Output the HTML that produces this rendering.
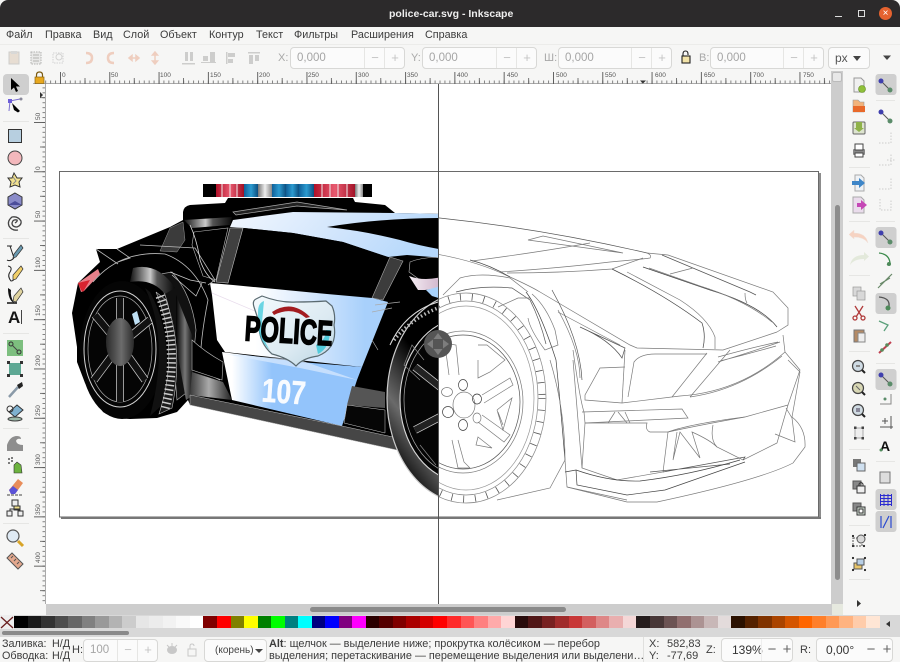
<!DOCTYPE html>
<html><head><meta charset="utf-8"><title>police-car.svg - Inkscape</title>
<style>
html,body{margin:0;padding:0;width:900px;height:662px;overflow:hidden;background:#f6f6f5}
body{position:relative;font-family:"Liberation Sans","DejaVu Sans",sans-serif;color:#3d3d3d}
.a{position:absolute}
.t{position:absolute;white-space:nowrap;line-height:14px}
.menu .t{top:28px;font-size:10.8px;color:#3c3c3c}
.inp{position:absolute;box-sizing:border-box;height:22px;background:#fbfbfb;border:1px solid #d8d8d6;border-radius:4px;font-size:11.5px;color:#a5a5a5;line-height:20px;padding-left:6px}
.inp i{position:absolute;top:0;bottom:0;width:20px;border-left:1px solid #e6e6e4;font-style:normal;text-align:center;color:#c4c4c4;font-size:13px;padding:0}
.lab{position:absolute;font-size:11px;color:#a8a8a8;top:51px;line-height:14px}
.r{position:absolute;font-size:6.5px;color:#555;top:72px;line-height:8px}
.rv{position:absolute;left:34px;font-size:6.5px;color:#555;transform:rotate(-90deg);transform-origin:0 0;line-height:8px;white-space:nowrap}
#wrap{filter:blur(.3px);position:absolute;left:0;top:0;width:900px;height:662px}
</style></head><body><div id="wrap">

<!-- title bar -->
<div class="a" style="left:0;top:0;width:900px;height:27px;background:#2c2a2b;border-radius:8px 8px 0 0"></div>
<div class="t" style="left:389px;top:7px;font-size:10.5px;font-weight:bold;color:#efefef">police-car.svg - Inkscape</div>
<div class="a" style="left:835px;top:16px;width:7px;height:1px;background:#ddd"></div>
<div class="a" style="left:858px;top:10px;width:5px;height:5px;border:1px solid #ddd"></div>
<div class="a" style="left:879px;top:7px;width:13px;height:13px;border-radius:50%;background:#e5622f;color:#fff;font-size:10px;line-height:13px;text-align:center">×</div>

<!-- menu -->
<div class="menu">
<div class="t" style="left:6px">Файл</div><div class="t" style="left:45px">Правка</div><div class="t" style="left:93px">Вид</div><div class="t" style="left:123px">Слой</div><div class="t" style="left:160px">Объект</div><div class="t" style="left:209px">Контур</div><div class="t" style="left:256px">Текст</div><div class="t" style="left:294px">Фильтры</div><div class="t" style="left:351px">Расширения</div><div class="t" style="left:425px">Справка</div>
</div>
<div class="a" style="left:0;top:44px;width:900px;height:1px;background:#ececea"></div>

<!-- top toolbar inputs -->
<div class="lab" style="left:278px">X:</div>
<div class="inp" style="left:290px;top:47px;width:115px">0,000<i style="left:73px">−</i><i style="left:93px">+</i></div>
<div class="lab" style="left:411px">Y:</div>
<div class="inp" style="left:422px;top:47px;width:115px">0,000<i style="left:73px">−</i><i style="left:93px">+</i></div>
<div class="lab" style="left:544px">Ш:</div>
<div class="inp" style="left:558px;top:47px;width:114px">0,000<i style="left:72px">−</i><i style="left:92px">+</i></div>
<div class="lab" style="left:699px">В:</div>
<div class="inp" style="left:710px;top:47px;width:114px">0,000<i style="left:72px">−</i><i style="left:92px">+</i></div>
<div class="inp" style="left:828px;top:47px;width:42px;color:#555;font-size:12px">px</div>

<!-- rulers -->
<div class="a" style="left:33px;top:71px;width:798px;height:13px;background:#f6f6f5;border-bottom:1px solid #aaa;box-sizing:border-box"></div>
<div class="r" style="left:62px">0</div><div class="r" style="left:111px">50</div><div class="r" style="left:160px">100</div><div class="r" style="left:210px">150</div><div class="r" style="left:259px">200</div><div class="r" style="left:308px">250</div><div class="r" style="left:358px">300</div><div class="r" style="left:407px">350</div><div class="r" style="left:457px">400</div><div class="r" style="left:507px">450</div><div class="r" style="left:556px">500</div><div class="r" style="left:605px">550</div><div class="r" style="left:655px">600</div><div class="r" style="left:704px">650</div><div class="r" style="left:753px">700</div><div class="r" style="left:803px">750</div>

<!-- canvas -->
<div class="a" style="left:46px;top:84px;width:785px;height:520px;background:#fff"></div>
<div class="a" style="left:831px;top:71px;width:12px;height:545px;background:#cdcdcd"></div>
<div class="a" style="left:835px;top:205px;width:5px;height:375px;background:#8c8c8c;border-radius:3px"></div>
<div class="a" style="left:46px;top:604px;width:785px;height:12px;background:#cdcdcd"></div>
<div class="a" style="left:310px;top:607px;width:256px;height:5px;background:#8a8a8a;border-radius:3px"></div>
<div class="a" style="left:832px;top:604px;width:11px;height:12px;background:#e6e9df"></div>
<div class="a" style="left:832px;top:72px;width:10px;height:10px;background:#e8e8e8;border:1px solid #bbb;border-radius:2px;box-sizing:border-box"></div>

<!-- main drawing -->
<svg class="a" style="left:0;top:0" width="900" height="662" viewBox="0 0 900 662">
<defs>
<pattern id="tx" width="4.93" height="13" patternUnits="userSpaceOnUse" x="60" y="71"><rect x="0" y="9.5" width=".8" height="3" fill="#666"/></pattern>
<pattern id="ty" width="13" height="4.93" patternUnits="userSpaceOnUse" x="33" y="122"><rect x="9.5" y="0" width="3" height=".8" fill="#666"/></pattern>
<pattern id="tX" width="49.3" height="13" patternUnits="userSpaceOnUse" x="60" y="71"><rect x="0" y="1" width=".9" height="12" fill="#555"/><rect x="24.6" y="7" width=".8" height="6" fill="#555"/></pattern>
<pattern id="tY" width="13" height="49.3" patternUnits="userSpaceOnUse" x="33" y="122"><rect x="1" y="0" width="12" height=".9" fill="#555"/><rect x="7" y="24.6" width="6" height=".8" fill="#555"/></pattern>
<clipPath id="cl"><rect x="46" y="84" width="392" height="520"/></clipPath>
<clipPath id="cr"><rect x="438.5" y="84" width="393" height="520"/></clipPath>
<linearGradient id="doorT" gradientUnits="userSpaceOnUse" x1="255" y1="0" x2="365" y2="0"><stop offset="0" stop-color="#fff"/><stop offset=".45" stop-color="#dcebfd"/><stop offset="1" stop-color="#a8d0fb"/></linearGradient>
<linearGradient id="doorB" gradientUnits="userSpaceOnUse" x1="232" y1="0" x2="272" y2="0"><stop offset="0" stop-color="#fff"/><stop offset="1" stop-color="#93c4fb"/></linearGradient>
<linearGradient id="roofb" x1="0" y1="0" x2="1" y2=".2"><stop offset="0" stop-color="#f2f7fe"/><stop offset=".6" stop-color="#cfe4fc"/><stop offset="1" stop-color="#b6d8fb"/></linearGradient>
<linearGradient id="met" x1="0" y1="0" x2="1" y2="0"><stop offset="0" stop-color="#111"/><stop offset=".45" stop-color="#c9c9c9"/><stop offset=".6" stop-color="#555"/><stop offset="1" stop-color="#0a0a0a"/></linearGradient>
<linearGradient id="met2" x1="0" y1="0" x2="1" y2="0"><stop offset="0" stop-color="#000"/><stop offset=".5" stop-color="#777"/><stop offset="1" stop-color="#000"/></linearGradient>
<linearGradient id="grs" x1="0" y1="0" x2="1" y2="0"><stop offset="0" stop-color="#3a3a3a"/><stop offset=".45" stop-color="#aaa"/><stop offset="1" stop-color="#222"/></linearGradient>
<linearGradient id="lbb" x1="0" y1="0" x2="1" y2="0"><stop offset="0" stop-color="#0f5f98"/><stop offset=".5" stop-color="#2c9bd0"/><stop offset="1" stop-color="#0d4f80"/></linearGradient>
<linearGradient id="lbr" x1="0" y1="0" x2="1" y2="0"><stop offset="0" stop-color="#b01028"/><stop offset=".5" stop-color="#e85a70"/><stop offset="1" stop-color="#a00f24"/></linearGradient>
<linearGradient id="lbw" x1="0" y1="0" x2="1" y2="0"><stop offset="0" stop-color="#777"/><stop offset=".5" stop-color="#eee"/><stop offset="1" stop-color="#888"/></linearGradient>
<linearGradient id="hub" x1="0" y1="0" x2="1" y2="0"><stop offset="0" stop-color="#2a2a2a"/><stop offset=".55" stop-color="#6c6c6c"/><stop offset="1" stop-color="#2a2a2a"/></linearGradient>
<linearGradient id="sh" x1="0" y1="0" x2="1" y2="1"><stop offset="0" stop-color="#f4fafd"/><stop offset=".6" stop-color="#dceaf2"/><stop offset="1" stop-color="#b8d4e2"/></linearGradient>
<linearGradient id="pink" x1="0" y1="0" x2="1" y2="0"><stop offset="0" stop-color="#f6eef4"/><stop offset="1" stop-color="#cbaec6"/></linearGradient>
<linearGradient id="tire" x1="1" y1="0" x2="0" y2="1"><stop offset=".55" stop-color="#000"/><stop offset=".74" stop-color="#6a6a6a"/><stop offset=".9" stop-color="#000"/></linearGradient>
</defs>

<rect x="33" y="71" width="798" height="13" fill="url(#tx)"/><rect x="33" y="71" width="798" height="13" fill="url(#tX)"/>
<rect x="33" y="84" width="13" height="520" fill="#f6f6f5"/>
<rect x="33" y="84" width="13" height="520" fill="url(#ty)"/><rect x="33" y="84" width="13" height="520" fill="url(#tY)"/>
<g font-family="Liberation Sans,sans-serif" font-size="6.500" fill="#555"><text transform="translate(40 120) rotate(-90)">50</text><text transform="translate(40 170) rotate(-90)">0</text><text transform="translate(40 218) rotate(-90)">50</text><text transform="translate(40 268) rotate(-90)">100</text><text transform="translate(40 316) rotate(-90)">150</text><text transform="translate(40 366) rotate(-90)">200</text><text transform="translate(40 416) rotate(-90)">250</text><text transform="translate(40 465) rotate(-90)">300</text><text transform="translate(40 515) rotate(-90)">350</text><text transform="translate(40 563) rotate(-90)">400</text></g>
<path d="M45.5 84V604" stroke="#aaa" stroke-width="1"/>
<path d="M640 80.500h6l-3 3z" fill="#333"/>
<path d="M40 92v6l3-3z" fill="#333"/>

<!-- page -->
<rect x="59.500" y="171.500" width="759" height="345.500" fill="#fff" stroke="#6a6a6a" stroke-width="1"/>
<rect x="819" y="173" width="2" height="346" fill="#8c8c8c"/>
<rect x="61" y="517" width="760" height="2" fill="#777"/>

<!-- left: colored car -->
<g clip-path="url(#cl)">
<path d="M72 313L78 283L100 262L96 249L117 249L170 227L183 220L183 212Q184 206 190 205L225 203L228 198H353L355 202L385 205L395 213L445 214V500L397 450L190 405L188 400L177 412L157 418L130 419Q112 418 103 412L85 383L77 362V347Z" fill="#000"/>
<!-- red tail -->
<path d="M78 283L98 269L100 274L84 291L81 292Z" fill="#e8808a"/><path d="M78 283L90 280L83 292L81 290Z" fill="#d8232f"/>
<!-- roof blue -->
<path d="M233 220L262 216L293 212L395 213L445 214V258L407 255L388 257L343 242L293 233L244 228L230 227Z" fill="url(#roofb)"/>
<path d="M327 227Q380 218 445 218V250Q420 246 400 240Q365 231 327 227Z" fill="#000"/>
<path d="M233 212L297 202L347 210L320 208L297 206L236 215Z" fill="#222" stroke="#aaa" stroke-width=".7"/>
<!-- window -->
<path d="M244 228L293 233L343 242L388 257L372 298L327 294L233 285Z" fill="#000"/>
<path d="M230 228L243 228L228 283L216 282Z" fill="#404040" stroke="#bbb" stroke-width=".6"/>
<path d="M390 257L403 261L383 300L372 298Z" fill="#3c3c3c" stroke="#aaa" stroke-width=".6"/>
<path d="M184 220L232 217L230 225L192 228Z" fill="url(#met)"/>
<path d="M160 251L170 228L183 222L185 240L177 252Z" fill="#3b3b3b" stroke="#999" stroke-width=".5"/>
<path d="M194 232L228 228L216 280L203 276L192 245Z" fill="#000" stroke="#bbb" stroke-width=".6"/>
<!-- door -->
<path d="M210 283L233 285L327 294L372 298L388 302L362 367L225 352L217 340L212 295Z" fill="url(#doorT)"/>
<path d="M222 352L300 362L362 367L357 380L342 426L232 400Z" fill="url(#doorB)"/>
<path d="M225 354L300 368L357 380L300 360Z" fill="#dcebfd" opacity=".7"/>
<path d="M212 293L300 330" stroke="#e8dcec" stroke-width=".7" fill="none"/>
<!-- lines on rear body -->
<path d="M96 249L118 264M117 249L130 258L118 262M140 245L195 248L215 280L208 285" stroke="#bbb" stroke-width=".8" fill="none"/>
<path d="M190 225Q197 240 200 260Q205 275 215 282" fill="none" stroke="#ddd" stroke-width=".8"/>
<path d="M93 282Q120 250 165 254Q195 265 208 300Q200 340 200 370L220 380" stroke="#bbb" fill="none" stroke-width=".8"/>
<path d="M172 272Q192 295 196 330L190 390L177 400L172 340Q172 300 155 275Z" fill="#111" stroke="#aaa" stroke-width=".7"/>
<path d="M176 295L192 335L194 395L186 400L176 345Z" fill="url(#met2)"/>
<path d="M133 268Q158 262 175 288L165 294Q152 278 130 282Z" fill="url(#met)"/>
<path d="M170 272L190 280L206 283M172 275L196 296L202 283" stroke="#ccc" fill="none" stroke-width=".7"/>
<path d="M192 372L223 382L232 400L190 395Z" fill="url(#grs)"/>
<path d="M352 386L385 392L385 408L347 405Z" fill="#555"/>
<path d="M347 405L385 410L385 433L344 423Z" fill="#060606" stroke="#ccc" stroke-width=".5"/>
<path d="M190 395L342 426L393 437L397 450L190 405Z" fill="#464646" stroke="#bdbdbd" stroke-width=".5"/>
<path d="M192 340Q205 352 223 362L222 380L192 370Z" fill="#000" stroke="#bbb" stroke-width=".6"/>
<path d="M375 305L400 302M372 312L392 308M372 340L378 350" stroke="#aaa" fill="none" stroke-width=".7"/>
<!-- headlight region -->
<path d="M410 262Q425 256 445 258V290L420 280L409 272Z" fill="#000" stroke="#bbb" stroke-width=".6"/>
<path d="M409 276Q425 282 445 276V287L425 290L418 290Z" fill="url(#pink)"/>
<path d="M426 290L445 285V300L432 296Z" fill="#a8d2fb"/>
<!-- rear wheel -->
<ellipse cx="122" cy="350" rx="42" ry="69" fill="#050505"/>
<path d="M150 292Q176 340 162 405L150 416Q170 340 145 288Z" fill="#111"/>
<path d="M156 292Q180 350 159 414L172 408Q184 350 166 300Z" fill="#1c1c1c" stroke="#bbb" stroke-width=".6"/>
<path d="M160 296Q180 350 165 409" fill="none" stroke="#ccc" stroke-width="9" stroke-dasharray="1.500 3"/>
<ellipse cx="120" cy="349" rx="36" ry="58" fill="#050505" stroke="#d4d4d4" stroke-width="1"/>
<ellipse cx="120" cy="349" rx="32" ry="53" fill="#050505" stroke="#aaa" stroke-width=".7"/>
<g stroke="#c8c8c8" stroke-width="8"><path d="M120 345V298M120 345V402M120 345L150 320M120 345L145 380M120 345L95 315M120 345L94 380"/></g>
<g stroke="#111" stroke-width="6.500"><path d="M120 345V298M120 345V402M120 345L150 320M120 345L145 380M120 345L95 315M120 345L94 380"/></g>
<ellipse cx="120" cy="342" rx="14" ry="24" fill="url(#hub)"/>
<path d="M132 314L137 311L140 322L135 325Z" fill="#bfe0f4"/>
<!-- front wheel -->
<ellipse cx="466" cy="398" rx="79" ry="105" fill="url(#tire)" stroke="#ccc" stroke-width="1.200"/>
<ellipse cx="465" cy="400" rx="65" ry="82" fill="#060606" stroke="#d8d8d8" stroke-width="1.100"/>
<ellipse cx="465" cy="400" rx="61" ry="76" fill="#050505" stroke="#aaa" stroke-width=".7"/>
<g stroke="#ccc" stroke-width="8"><path d="M463 405L415 367M463 405L415 430"/></g>
<g stroke="#222" stroke-width="6.500"><path d="M463 405L415 367M463 405L415 430"/></g>
<path d="M424 360L412 345L404 365L420 380M420 445L436 465" stroke="#888" fill="none" stroke-width=".7"/>
<!-- tread near top -->
<path d="M394 340Q412 318 438 308" fill="none" stroke="#bbb" stroke-width="3.500" stroke-dasharray="1.500 2.500"/>
<path d="M390 345Q405 312 438 302" fill="none" stroke="#ddd" stroke-width="1"/>
<!-- bar -->
<rect x="203" y="184" width="13" height="13" fill="#000"/>
<rect x="216" y="184" width="28" height="13" fill="url(#lbr)"/><path d="M222 184v13M230 184v13M237 184v13" stroke="#eee" stroke-width="1"/>
<rect x="244" y="184" width="14" height="13" fill="url(#lbb)"/>
<rect x="258" y="184" width="14" height="13" fill="url(#lbw)"/>
<rect x="272" y="184" width="14" height="13" fill="url(#lbb)"/><rect x="286" y="184" width="13" height="13" fill="url(#lbb)"/><rect x="299" y="184" width="15" height="13" fill="url(#lbb)"/>
<rect x="314" y="184" width="42" height="13" fill="url(#lbr)"/><path d="M322 184v13M330 184v13M338 184v13M347 184v13" stroke="#eee" stroke-width="1"/>
<rect x="355" y="184" width="8" height="13" fill="url(#lbw)"/><rect x="363" y="184" width="9" height="13" fill="#000"/>
<!-- shield -->
<path d="M254 307Q252 301 256 299L262 296Q280 303 296 302Q312 302 326 301L332 306Q336 315 334 325Q338 348 318 356Q303 358 296 366Q288 358 272 354Q258 342 259 322Z" fill="url(#sh)" stroke="#5a6a70" stroke-width="1.200"/>
<path d="M258 312Q258 303 264 301L262 322Q262 340 270 350Q258 340 258 322Z" fill="#33c6d8" opacity=".7"/>
<path d="M316 345Q326 340 326 330L330 330Q330 348 318 354Z" fill="#33c6d8" opacity=".8"/>
<path d="M272 312Q292 299 310 317L306 318Q292 306 274 315Z" fill="#a31c20"/>
<text x="245" y="343" font-family="Liberation Sans,sans-serif" font-size="35" font-weight="bold" fill="#000" stroke="#000" stroke-width="1.500" textLength="88" lengthAdjust="spacingAndGlyphs" transform="rotate(3.500 290 328)">POLICE</text>
<text x="262" y="403" font-family="Liberation Sans,sans-serif" font-size="33" font-weight="bold" fill="#f8fbff" stroke="#f8fbff" stroke-width=".5" textLength="44" lengthAdjust="spacingAndGlyphs" transform="rotate(4 284 390)">107</text>
</g>

<!-- right: outline -->
<g clip-path="url(#cr)" fill="none" stroke="#7a7a7a" stroke-width=".7">
<path d="M430 217Q540 228 647 253" stroke="#555"/>
<path d="M647 253Q652 255 650 258Q644 259 610 262Q560 268 500 272"/>
<path d="M647 253L668 255L773 292L788 308V325L777 332"/>
<path d="M662 255L750 292L756 295" stroke="#555"/>
<path d="M507 273Q560 273 612 269L643 258"/>
<path d="M528 240L543 236L623 253Z"/>
<path d="M472 261Q540 252 590 243"/>
<path d="M430 253Q475 260 510 277Q530 286 540 292L630 345L637 348L723 350L777 332"/>
<path d="M470 260Q490 265 510 277" stroke="#444"/>
<path d="M612 269Q665 295 702 323Q706 335 703 348" stroke="#444"/>
<path d="M627 272L680 300Q708 318 715 337V349"/>
<path d="M643 267L710 290Q760 305 777 327" stroke="#444"/>
<path d="M649 268L700 286Q745 300 772 322"/>
<path d="M670 274L693 268M745 293Q745 300 747 303"/>
<path d="M443 295L460 278Q480 272 510 278L528 292"/>
<path d="M456 292Q480 285 512 288L530 300Q540 320 546 344" stroke="#555"/>
<path d="M498 307L518 298H530"/>
<path d="M526 292Q540 310 556 360Q560 400 565 460" stroke="#444"/>
<path d="M528 318Q530 330 545 350L558 345L555 330Q546 306 532 294"/>
<path d="M558 310Q580 350 580 378M558 312L620 345"/>
<path d="M580 327L625 348L622 358Q610 340 580 327" stroke="#555"/>
<path d="M552 290Q580 340 582 380" stroke="#555"/>
<path d="M625 350L622 403"/>
<path d="M625 367L600 368L585 395V400L622 403"/>
<path d="M628 397L634 362Q640 354 655 354H707"/>
<path d="M707 353L672 397M730 350L690 397"/>
<path d="M622 403L680 396Q740 392 785 352"/>
<path d="M690 397Q740 390 782 356"/>
<path d="M718 357Q750 348 778 342M718 362Q745 354 780 342M720 361Q748 354 776 346"/>
<path d="M783 335L785 352L800 370L788 405"/>
<path d="M788 360L800 372L792 417"/>
<path d="M573 350Q580 400 584 412L585 423L582 468L617 480L663 472L668 432Q700 425 745 417"/>
<path d="M582 412L682 409L688 418L585 423"/>
<path d="M585 423H647Q645 430 650 432L668 432"/>
<path d="M615 412L608 423M625 412L630 423M618 412L627 423"/>
<path d="M668 432Q690 424 745 417Q770 410 788 405"/>
<path d="M713 425Q710 440 717 447L743 460L777 443L788 405"/>
<path d="M743 460L745 457L663 472M650 472L730 464" stroke="#555"/>
<path d="M677 432L673 460L680 432L700 458L692 432Q710 440 717 447"/>
<path d="M775 434L795 442L792 418L786 408"/>
<path d="M792 417Q806 428 805 447L793 463Q760 480 657 502H627L567 487"/>
<path d="M565 460L567 487L627 500"/>
<path d="M576 470L577 485L627 495L665 490L745 462" stroke="#444"/>
<path d="M565 472L576 470Q610 482 640 481Q690 475 740 460" stroke="#444"/>
<path d="M573 360Q578 420 582 468"/>
<path d="M550 360Q565 410 565 460L550 488L497 500"/>
<!-- wheel -->
<ellipse cx="466" cy="398" rx="80" ry="105" stroke="#888"/>
<ellipse cx="466" cy="398" rx="72" ry="97" stroke="#888"/>
<ellipse cx="466" cy="398" rx="76" ry="101" stroke="#555" stroke-width="7" stroke-dasharray=".8 11"/>
<ellipse cx="466" cy="398" rx="68" ry="92" stroke="#999"/>
<ellipse cx="463" cy="402" rx="60" ry="71"/>
<ellipse cx="463" cy="402" rx="57" ry="67" stroke="#555"/>
<ellipse cx="464" cy="405" rx="11" ry="13"/>
<ellipse cx="463" cy="385" rx="4.500" ry="5.500" stroke="#444"/><ellipse cx="477" cy="399" rx="4.500" ry="5" stroke="#333"/><ellipse cx="477" cy="418" rx="4" ry="5"/><ellipse cx="463" cy="425" rx="4.500" ry="5.500" stroke="#444"/><ellipse cx="448" cy="412" rx="5.500" ry="5.500" stroke="#444"/><ellipse cx="447" cy="392" rx="5.500" ry="4.500"/>
<path d="M482 395L510 378L513 385L484 403M482 415L510 435L504 442L478 422"/>
<path d="M458 440L464 462L470 468L458 468L452 440"/>
<path d="M459 375L456 345L450 344L445 345L449 375"/>
<path d="M478 360V378L490 372L505 360L487 345L478 345M497 410L512 398L503 430L497 410M498 412L503 425"/>
<path d="M478 437L492 448L476 445Z"/>
</g>

<!-- guide -->
<path d="M438.500 84V604" stroke="#555" stroke-width="1"/>
<!-- compass -->
<circle cx="438" cy="344" r="14" fill="#555"/>
<g fill="#7d7d7d"><path d="M438 333l4.500 6h-9zM438 355l4.500-6h-9zM427 344l6-4.500v9zM449 344l-6-4.500v9z"/></g>

<!-- lock at ruler corner -->
<path d="M36.500 77v-2q0-3 3-3t3 3v2" fill="none" stroke="#7a5a10" stroke-width="1.200"/><rect x="35" y="77" width="9" height="6.500" fill="#e8a81e" stroke="#8a6410" stroke-width=".7"/>

<!-- top toolbar icons -->
<g opacity=".32">
<g transform="translate(14 58)"><rect x="-5" y="-6" width="10" height="12" fill="#c6a98a" stroke="#777"/><rect x="-3" y="-7" width="6" height="3" fill="#999"/></g>
<g transform="translate(36 58)"><rect x="-5" y="-6" width="10" height="12" fill="#ccc" stroke="#222" stroke-dasharray="1.500 1"/><path d="M-3-3h6M-3 0h6M-3 3h6" stroke="#222"/></g>
<g transform="translate(58 58)" fill="none" stroke="#888"><rect x="-5" y="-5" width="10" height="10" stroke-dasharray="1.500 1"/><circle cx="1" cy="-1" r="3"/></g>
<path d="M86 53q6 0 6 5t-6 5" fill="none" stroke="#e07a50" stroke-width="2.500"/>
<path d="M114 53q-6 0-6 5t6 5" fill="none" stroke="#e07a50" stroke-width="2.500"/>
<path d="M129 58h10M129 58l3-2.500v5zM139 58l-3-2.500v5z" stroke="#e07a50" fill="#e07a50" stroke-width="1.500"/>
<path d="M155 52v12M155 52l-2.500 3h5zM155 64l-2.500-3h5z" stroke="#e07a50" fill="#e07a50" stroke-width="1.500"/>
<g fill="#777"><rect x="185" y="52" width="3" height="9"/><rect x="190" y="52" width="3" height="9"/><rect x="182" y="63" width="13" height="1.500"/></g>
<g fill="#777"><rect x="203" y="56" width="5" height="5"/><rect x="210" y="52" width="5" height="10"/><rect x="201" y="62" width="15" height="1"/></g>
<g fill="#777"><rect x="226" y="52" width="1.500" height="12"/><rect x="228" y="53" width="7" height="4"/><rect x="228" y="59" width="5" height="4"/></g>
<g fill="#777"><rect x="248" y="52" width="12" height="1.500"/><rect x="249" y="55" width="4" height="9"/><rect x="255" y="55" width="4" height="6"/></g>
</g>
<g transform="translate(686 58)" fill="none" stroke="#222" stroke-width="1.100"><path d="M-3-2v-2q0-3 2.500-3t2.500 3v1"/><rect x="-4" y="-2" width="8" height="7" fill="#f2e3a8"/></g>
<path d="M853 56l4 5 4-5z" fill="#444"/>
<path d="M883 55.500h8l-4 4.500z" fill="#444"/>

<!-- left toolbar -->
<rect x="3" y="74" width="26" height="21" rx="4" fill="#cfcfcf"/>
<path d="M11 78V90L14 87.500L16 92L18 91L16 86.500H20Z" fill="#000"/>
<g transform="translate(15 105)"><path d="M-5-4L5-6M-5-4L-6 6" stroke="#7a6fd0" fill="none"/><rect x="-7" y="-6" width="4" height="4" fill="#6d5dd8"/><circle cx="6" cy="-6" r="1.500" fill="#889"/><path d="M-3-2L5 6L3 7.500L-1 5Z" fill="#000"/></g>
<g transform="translate(15 136)"><rect x="-6.500" y="-6.500" width="13" height="13" fill="#b7cfe0" stroke="#333"/></g>
<g transform="translate(15 158)"><circle r="7" fill="#f3b8bc" stroke="#444"/></g>
<g transform="translate(15 180)"><path d="M-1-7L2-2L7-2L4 2L5 7L0 5L-5 7L-4 2L-7-2L-3-2Z" fill="#f1e190" stroke="#333"/><path d="M-2-3l3 4-3 3" stroke="#888" fill="none"/></g>
<g transform="translate(15 201)"><path d="M0-8L7-4V4L0 8L-7 4V-4Z" fill="#8a8bc8" stroke="#333"/><path d="M-7 4L0 0L7 4" fill="#4c4d9a"/></g>
<g transform="translate(15 223)" fill="none" stroke="#444" stroke-width="1.300"><path d="M0 0Q3-2 2-3Q-2-4-3 0Q-3 4 2 4Q7 2 6-2Q3-7-3-6Q-8-2-6 3Q-3 8 3 7"/></g>
<g transform="translate(15 253)"><path d="M-5-7L-1 5M-1 5Q-5 9-8 7" stroke="#222" fill="none"/><path d="M6-8L8-5L1 4L-2 5L-1 1Z" fill="#6a9ab0" stroke="#333" stroke-width=".7"/><path d="M-8-7H-3" stroke="#222"/></g>
<g transform="translate(15 274)"><path d="M-7-8Q-2-7-5-2Q-8 2-4 7Q-1 7-1 4" stroke="#222" fill="none"/><path d="M6-8L8-5L1 5L-2 6L-2 1Z" fill="#f2d06a" stroke="#333" stroke-width=".7"/></g>
<g transform="translate(15 296)"><path d="M-7-8Q-7 4-1 7Q-5 0-4-6Z" fill="#111"/><path d="M6-8L8-4L1 6L-2 5L-1 0Z" fill="#e0d4a0" stroke="#333" stroke-width=".7"/><path d="M-8 7H2" stroke="#111" stroke-width="1.500"/></g>
<text x="8" y="323" font-family="Liberation Sans,sans-serif" font-size="17" font-weight="bold" fill="#151515">A</text><path d="M21.500 310V324" stroke="#444"/>
<g transform="translate(15 348)"><rect x="-8" y="-8" width="16" height="16" fill="#7dbf7f"/><circle cx="-4" cy="-4" r="2" fill="none" stroke="#333"/><circle cx="4" cy="4" r="2" fill="none" stroke="#333"/><path d="M-3-3L3 3" stroke="#444"/></g>
<g transform="translate(15 369)"><rect x="-6" y="-6" width="12" height="12" fill="#5ea894"/><g fill="#333"><rect x="-8" y="-8" width="3" height="3"/><rect x="5" y="-8" width="3" height="3"/><rect x="-8" y="5" width="3" height="3"/><rect x="5" y="5" width="3" height="3"/></g></g>
<g transform="translate(15 390)"><path d="M-6 7L3-3" stroke="#8a9aa8" stroke-width="2.500"/><path d="M2-5L7-8L8-4L4-1Z" fill="#222"/></g>
<g transform="translate(15 412)"><ellipse cx="0" cy="7" rx="7" ry="2" fill="#9bb9a8" stroke="#444"/><path d="M-6 0L2-7L8-2L0 5Z" fill="#7fb1cf" stroke="#333"/><circle cx="-5" cy="-3" r="3" fill="none" stroke="#333"/></g>
<g transform="translate(15 443)"><path d="M-8 8V2Q-5-7 2-7Q6-7 6-4Q2-5 1-2Q2 2 8 2V8Z" fill="#8e8e8e"/></g>
<g transform="translate(15 465)"><path d="M-1 0L2-3L6 0L7 8H-1Z" fill="#6db33f" stroke="#333" stroke-width=".6"/><circle cx="-6" cy="-6" r="1" fill="#555"/><circle cx="-3" cy="-4" r="1" fill="#555"/><circle cx="-6" cy="-2" r="1" fill="#555"/><circle cx="-3" cy="-7" r="1" fill="#555"/></g>
<g transform="translate(15 487)"><path d="M-6 3L3-8L8-4L0 7H-4Z" fill="#e88d5a"/><path d="M-6 3L-2-1L3 3L0 7H-4Z" fill="#5a52d6"/><path d="M-8 8H8" stroke="#444" stroke-dasharray="3 1"/></g>
<g transform="translate(15 508)" fill="none" stroke="#333"><rect x="-3" y="-8" width="6" height="6" fill="#eee"/><rect x="-8" y="3" width="5" height="5" fill="#eee"/><rect x="3" y="3" width="5" height="5" fill="#eee"/><rect x="-1" y="-2" width="6" height="4" fill="#eedd88"/><path d="M-5 3V1H5V3"/></g>
<g transform="translate(15 538)"><circle cx="-2" cy="-2" r="6" fill="#dfeaf4" stroke="#555" stroke-width="1.200"/><path d="M3 3L8 8" stroke="#d8a428" stroke-width="3"/></g>
<g transform="translate(15 561)"><path d="M-8-3L-3-8L8 3L3 8Z" fill="#e3a88e" stroke="#555"/><path d="M-4-3l2-2M-1 0l2-2M2 3l2-2" stroke="#555"/></g>
<g fill="#e6e6e4"><rect x="3" y="121" width="26" height="1"/><rect x="3" y="238" width="26" height="1"/><rect x="3" y="333" width="26" height="1"/><rect x="3" y="428" width="26" height="1"/><rect x="3" y="523" width="26" height="1"/></g>

<!-- right col 1 -->
<g transform="translate(859 85)"><path d="M-5-7H2L5-4V7H-5Z" fill="#f0f0f0" stroke="#999"/><circle cx="3" cy="4" r="3.500" fill="#8fc03a" stroke="#5d8a1e" stroke-width=".6"/></g>
<g transform="translate(859 106)"><path d="M-6-6H-1L1-4H5V6H-6Z" fill="#f2b27a" stroke="#999" stroke-width=".6"/><path d="M-6 0H6V6H-6Z" fill="#e8692a"/></g>
<g transform="translate(859 128)"><rect x="-6" y="-6" width="12" height="12" rx="1" fill="#dde4cf" stroke="#666"/><path d="M-3-6H3V0H5L0 4L-5 0H-3Z" fill="#8fb24a"/></g>
<g transform="translate(859 151)"><rect x="-6" y="-2" width="12" height="6" rx="1" fill="#888"/><rect x="-4" y="-7" width="8" height="6" fill="#fff" stroke="#444"/><rect x="-4" y="2" width="8" height="4" fill="#fff" stroke="#444"/></g>
<g transform="translate(859 183)"><path d="M-4-8H2L5-5V8H-4Z" fill="#eef2f6" stroke="#aaa"/><path d="M-7-2H0V-5L6 0L0 5V2H-7Z" fill="#3e86c8"/></g>
<g transform="translate(859 205)"><path d="M-6-8H2L5-5V8H-6Z" fill="#eadcec" stroke="#aaa"/><path d="M-2-2H2V-5L8 0L2 5V2H-2Z" fill="#c548b6"/></g>
<path d="M854 239L849 234.500L854 230V233Q866 233 868 243Q864 237 854 237Z" fill="#f6d3c2" stroke="#f0e0d8" stroke-width=".5"/>
<path d="M864 261L869 256.500L864 252V255Q852 255 850 265Q854 259 864 259Z" fill="#dfe6d4" opacity=".8"/>
<g fill="#d8d8d8" stroke="#999" stroke-width=".7"><rect x="853" y="287" width="8" height="9"/><rect x="857" y="291" width="8" height="9"/></g>
<g transform="translate(859 313)" fill="none" stroke="#b03a3a" stroke-width="1.300"><path d="M-4-7L3 4M4-7L-3 4"/><circle cx="-4" cy="5" r="2"/><circle cx="4" cy="5" r="2"/></g>
<g transform="translate(859 335)"><rect x="-5" y="-5" width="10" height="12" fill="#b48a64" stroke="#777"/><rect x="-1" y="-2" width="7" height="9" fill="#eee" stroke="#888"/></g>
<g transform="translate(859 367)"><circle cx="-1" cy="-1" r="5.500" fill="#cfdbe4" stroke="#444" stroke-width="1.200"/><rect x="-3" y="-2" width="4" height="2" fill="#888"/><path d="M3 3L6 6" stroke="#222" stroke-width="2"/></g>
<g transform="translate(859 389)"><circle cx="-1" cy="-1" r="5.500" fill="#d8d7b4" stroke="#444" stroke-width="1.200"/><path d="M-3-3L1 1" stroke="#666"/><path d="M3 3L6 6" stroke="#222" stroke-width="2"/></g>
<g transform="translate(859 411)"><circle cx="-1" cy="-1" r="5.500" fill="#d0dbe2" stroke="#444" stroke-width="1.200"/><rect x="-3" y="-3" width="4" height="4" fill="#889"/><path d="M3 3L6 6" stroke="#222" stroke-width="2"/></g>
<g transform="translate(859 433)"><rect x="-4" y="-5" width="8" height="10" fill="#eee" stroke="#aaa"/><g fill="#444"><rect x="-5" y="-6.500" width="2.500" height="2.500"/><rect x="2.500" y="-6.500" width="2.500" height="2.500"/><rect x="-5" y="4" width="2.500" height="2.500"/><rect x="2.500" y="4" width="2.500" height="2.500"/></g></g>
<g transform="translate(859 465)"><rect x="-6" y="-6" width="8" height="8" fill="#777"/><rect x="-2" y="-2" width="8" height="8" fill="#cfe0f0" stroke="#666"/></g>
<g transform="translate(859 487)"><rect x="-6" y="-6" width="8" height="8" fill="#888" stroke="#555"/><rect x="-2" y="-1" width="8" height="7" fill="#eee" stroke="#333"/><path d="M0-1v-2q2-3 4 0v2" fill="none" stroke="#333"/></g>
<g transform="translate(859 509)"><rect x="-6" y="-6" width="8" height="8" fill="#888" stroke="#555"/><rect x="-2" y="-2" width="8" height="8" fill="#d8e4da" stroke="#333"/><rect x="0" y="0" width="4" height="4" fill="#fff" stroke="#333"/></g>
<g transform="translate(859 541)"><rect x="-6" y="-3" width="9" height="8" fill="none" stroke="#555" stroke-dasharray="2 1"/><circle cx="2" cy="-2" r="4" fill="#d8d8d8" stroke="#555"/><g fill="#222"><circle cx="-6" cy="5" r="1.100"/><circle cx="6" cy="-6" r="1.100"/><circle cx="-6" cy="-5" r="1.100"/><circle cx="5" cy="5" r="1.100"/></g></g>
<g transform="translate(859 564)"><rect x="-5" y="-1" width="8" height="6" fill="#e8c56a" stroke="#555"/><rect x="-2" y="-5" width="7" height="6" fill="#b8cfe6" stroke="#555"/><g fill="#222"><circle cx="-6" cy="6" r="1.100"/><circle cx="6" cy="-6" r="1.100"/><circle cx="-6" cy="-6" r="1.100"/><circle cx="6" cy="6" r="1.100"/></g></g>
<path d="M857 600v7l4-3.500z" fill="#333"/>
<g fill="#e6e6e4"><rect x="849" y="167" width="21" height="1"/><rect x="849" y="221" width="21" height="1"/><rect x="849" y="275" width="21" height="1"/><rect x="849" y="351" width="21" height="1"/><rect x="849" y="449" width="21" height="1"/><rect x="849" y="525" width="21" height="1"/><rect x="849" y="579" width="21" height="1"/><rect x="876" y="100" width="19" height="1"/><rect x="876" y="221" width="19" height="1"/><rect x="876" y="363" width="19" height="1"/><rect x="876" y="461" width="19" height="1"/></g>

<!-- right col 2 -->
<rect x="875.500" y="74" width="21" height="21" rx="3" fill="#cfcfcf"/><rect x="875.500" y="227" width="21" height="21" rx="3" fill="#cfcfcf"/><rect x="875.500" y="293" width="21" height="21" rx="3" fill="#cfcfcf"/><rect x="875.500" y="369" width="21" height="21" rx="3" fill="#cfcfcf"/><rect x="875.500" y="489" width="21" height="21" rx="3" fill="#cfcfcf"/><rect x="875.500" y="511" width="21" height="21" rx="3" fill="#cfcfcf"/>
<g transform="translate(885 85)"><path d="M-4-4L5 5" stroke="#555"/><circle cx="-4" cy="-4" r="2.500" fill="#3f3fae"/><circle cx="5" cy="5" r="2.500" fill="#5b8c6a"/></g>
<g transform="translate(885 116)"><path d="M-4-4L5 5" stroke="#555"/><circle cx="-4" cy="-4" r="2.500" fill="#3f3fae"/><circle cx="5" cy="5" r="2.500" fill="#5b8c6a"/></g>
<g fill="none" stroke="#ccc" stroke-dasharray="1.500 1.500"><path d="M879 143H891V131"/><path d="M879 165H891V153M887 160H895"/><path d="M879 189H891V178"/><path d="M880 199V210H891V199"/></g>
<g transform="translate(885 237)"><path d="M-4-4L5 5" stroke="#555"/><circle cx="-4" cy="-4" r="2.500" fill="#3f3fae"/><circle cx="5" cy="5" r="2.500" fill="#5b8c6a"/></g>
<path d="M879 253Q889 254 890 263L887 265" fill="none" stroke="#3a8a4a" stroke-width="1.300"/><circle cx="889" cy="264" r="2" fill="#4e8a5a"/>
<path d="M878 288L892 274M880 284L890 278" stroke="#6a8a6a" stroke-width="1.200"/>
<path d="M879 297Q890 298 889 306" fill="none" stroke="#555" stroke-width="1.300"/><circle cx="888" cy="308" r="2.500" fill="#4e8a5a"/>
<path d="M879 321L888 325L884 331" fill="none" stroke="#5aa07a" stroke-width="1.300"/>
<path d="M879 353L891 342" stroke="#c04050" stroke-width="2"/><circle cx="887" cy="345" r="1.800" fill="#5a8a5a"/><circle cx="882" cy="350" r="1.800" fill="#5a8a5a"/>
<g transform="translate(885 379)"><path d="M-4-4L5 5" stroke="#555"/><circle cx="-4" cy="-4" r="2.500" fill="#3f3fae"/><circle cx="5" cy="5" r="2.500" fill="#5b8c6a"/></g>
<path d="M880 404H891V394" fill="none" stroke="#888"/><circle cx="885" cy="399" r="1.500" fill="#5b8c6a"/>
<path d="M880 427H893M891 416V429M882 421H888M885 418V424" fill="none" stroke="#555"/>
<text x="880" y="451" font-family="Liberation Sans,sans-serif" font-size="14" font-weight="bold" fill="#111">A</text><circle cx="881" cy="450" r="1.500" fill="#4e8a5a"/>
<rect x="880" y="472" width="10" height="11" fill="#ddd" stroke="#777"/>
<g stroke="#2a2ad0" stroke-width="1" fill="none"><path d="M880.500 494V506M884 494V506M888 494V506M891.500 494V506M880 495.500H892M880 498.500H892M880 501.500H892M880 504.500H892"/></g>
<g stroke="#2a4ad0" stroke-width="1.200" fill="none"><path d="M881 516V528M891 516V528M883 528L889 516"/></g>
</svg>

<!-- palette swatches -->
<div class="a" style="left:0;top:615px;width:900px;height:22px;background:#d8d8d8"></div>
<div class="a" style="left:0;top:615px;width:14px;height:14px;background:#eee"></div>
<svg class="a" style="left:0;top:615px" width="14" height="14"><path d="M1 2L13 13M13 2L1 13" stroke="#6a2020" stroke-width="1.300"/></svg>
<div class="a" style="left:14px;top:616px;height:12px;width:866px;display:flex">
<b style="flex:1;background:#000"></b><b style="flex:1;background:#1a1a1a"></b><b style="flex:1;background:#333"></b><b style="flex:1;background:#4d4d4d"></b><b style="flex:1;background:#666"></b><b style="flex:1;background:#808080"></b><b style="flex:1;background:#999"></b><b style="flex:1;background:#b3b3b3"></b><b style="flex:1;background:#ccc"></b><b style="flex:1;background:#e6e6e6"></b><b style="flex:1;background:#ececec"></b><b style="flex:1;background:#f2f2f2"></b><b style="flex:1;background:#f9f9f9"></b><b style="flex:1;background:#fff"></b>
<b style="flex:1;background:#800000"></b><b style="flex:1;background:#f00"></b><b style="flex:1;background:#808000"></b><b style="flex:1;background:#ff0"></b><b style="flex:1;background:#008000"></b><b style="flex:1;background:#0f0"></b><b style="flex:1;background:#008080"></b><b style="flex:1;background:#0ff"></b><b style="flex:1;background:#000080"></b><b style="flex:1;background:#00f"></b><b style="flex:1;background:#800080"></b><b style="flex:1;background:#f0f"></b>
<b style="flex:1;background:#2b0000"></b><b style="flex:1;background:#550000"></b><b style="flex:1;background:#800000"></b><b style="flex:1;background:#aa0000"></b><b style="flex:1;background:#d40000"></b><b style="flex:1;background:#f00"></b><b style="flex:1;background:#ff2a2a"></b><b style="flex:1;background:#f55"></b><b style="flex:1;background:#ff8080"></b><b style="flex:1;background:#faa"></b><b style="flex:1;background:#ffd5d5"></b>
<b style="flex:1;background:#280b0b"></b><b style="flex:1;background:#501616"></b><b style="flex:1;background:#782121"></b><b style="flex:1;background:#a02c2c"></b><b style="flex:1;background:#c83737"></b><b style="flex:1;background:#d35f5f"></b><b style="flex:1;background:#de8787"></b><b style="flex:1;background:#e9afaf"></b><b style="flex:1;background:#f4d7d7"></b>
<b style="flex:1;background:#241c1c"></b><b style="flex:1;background:#483737"></b><b style="flex:1;background:#6c5353"></b><b style="flex:1;background:#916f6f"></b><b style="flex:1;background:#ac9393"></b><b style="flex:1;background:#c8b7b7"></b><b style="flex:1;background:#e3dbdb"></b>
<b style="flex:1;background:#2b1100"></b><b style="flex:1;background:#520"></b><b style="flex:1;background:#803300"></b><b style="flex:1;background:#a40"></b><b style="flex:1;background:#d45500"></b><b style="flex:1;background:#f60"></b><b style="flex:1;background:#ff7f2a"></b><b style="flex:1;background:#f95"></b><b style="flex:1;background:#ffb380"></b><b style="flex:1;background:#fca"></b><b style="flex:1;background:#ffe6d5"></b>
</div>
<div class="a" style="left:886px;top:621px;width:0;height:0;border-top:3.500px solid transparent;border-bottom:3.500px solid transparent;border-right:4px solid #333"></div>
<div class="a" style="left:2px;top:631px;width:127px;height:4px;background:#8a8a8a;border-radius:3px"></div>

<!-- status bar -->
<div class="a" style="left:0;top:637px;width:900px;height:25px;background:#f6f6f5"></div>
<div class="t" style="left:2px;top:637px;font-size:10.8px">Заливка:</div><div class="t" style="left:52px;top:637px;font-size:10.8px">Н/Д</div>
<div class="t" style="left:2px;top:649px;font-size:10.8px">Обводка:</div><div class="t" style="left:52px;top:649px;font-size:10.8px">Н/Д</div>
<div class="t" style="left:72px;top:643px;font-size:11px">Н:</div>
<div class="inp" style="left:83px;top:639px;width:75px;height:23px">100<i style="left:33px">−</i><i style="left:53px">+</i></div>
<svg class="a" style="left:164px;top:641px" width="36" height="18"><g fill="#c8c8c8"><ellipse cx="8" cy="9" rx="5" ry="4"/><path d="M3 4l2 2M8 2v3M13 4l-2 2" stroke="#c8c8c8"/></g><g fill="none" stroke="#c8c8c8"><rect x="24" y="8" width="8" height="7"/><path d="M26 8V5q0-2 2-2t2 2"/></g></svg>
<div class="a" style="left:204px;top:639px;width:63px;height:23px;box-sizing:border-box;background:#fbfbfb;border:1px solid #d8d8d6;border-radius:4px;font-size:10px;line-height:21px;padding-left:10px;color:#444">(корень)<span class="a" style="left:50px;top:9px;border-left:4px solid transparent;border-right:4px solid transparent;border-top:4px solid #444"></span></div>
<div class="t" style="left:269px;top:637px;font-size:10.9px;color:#3c3c3c"><b>Alt</b>: щелчок — выделение ниже; прокрутка колёсиком — перебор</div>
<div class="t" style="left:269px;top:649px;font-size:10.9px;color:#3c3c3c">выделения; перетаскивание — перемещение выделения или выделени…</div>
<div class="a" style="left:643px;top:637px;width:1px;height:25px;background:#e0e0de"></div>
<div class="t" style="left:649px;top:637px;font-size:11px">X:</div><div class="t" style="left:649px;top:649px;font-size:11px">Y:</div>
<div class="t" style="left:667px;top:637px;width:31px;text-align:right;font-size:11px">582,83</div><div class="t" style="left:667px;top:649px;width:31px;text-align:right;font-size:11px">-77,69</div>
<div class="t" style="left:706px;top:643px;font-size:11px">Z:</div>
<div class="inp" style="left:721px;top:638px;width:72px;height:24px;color:#333;padding-left:10px;line-height:22px;font-size:12px">139%<i style="left:39px;color:#666;line-height:22px;font-size:15px;border-left:1px solid #eee">−</i><i style="left:55px;color:#666;line-height:22px;font-size:15px;border:0">+</i></div>
<div class="t" style="left:800px;top:643px;font-size:11px">R:</div>
<div class="inp" style="left:816px;top:638px;width:77px;height:24px;color:#333;padding-left:9px;line-height:22px;font-size:12px">0,00°<i style="left:44px;color:#666;line-height:22px;font-size:15px;border:0">−</i><i style="left:60px;color:#666;line-height:22px;font-size:15px;border:0">+</i></div>
</div></body></html>
